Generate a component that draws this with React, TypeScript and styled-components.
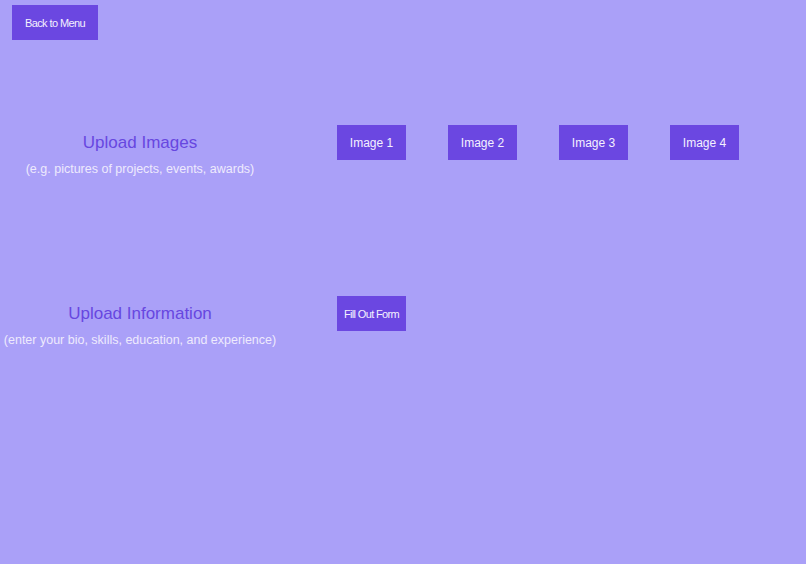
import React from "react";
import styled, { createGlobalStyle } from "styled-components";

const GlobalStyle = createGlobalStyle`
  html, body {
    margin: 0;
    padding: 0;
    background: #aaa0f8;
    font-family: "Liberation Sans", Arial, sans-serif;
  }
`;

const Page = styled.div`
  min-height: 100vh;
  background: #aaa0f8;
  display: flex;
  flex-direction: column;
`;

const TopBar = styled.div`
  display: flex;
  padding: 5px 12px 0;
`;

const Button = styled.button<{ $tight?: boolean }>`
  width: 69px;
  height: 35px;
  padding: 0;
  border: 0;
  border-radius: 0;
  background: #6b47e1;
  color: #f4f1ff;
  font-family: "Liberation Sans", Arial, sans-serif;
  font-size: ${(p) => (p.$tight ? "11px" : "12px")};
  letter-spacing: ${(p) => (p.$tight ? "-0.65px" : "0")};
  white-space: nowrap;
  display: flex;
  align-items: center;
  justify-content: center;
  cursor: pointer;
`;

const MenuButton = styled(Button)`
  width: 86px;
  font-size: 11px;
  letter-spacing: -0.6px;
`;

const Sections = styled.div`
  display: flex;
  flex-direction: column;
  gap: 119px;
  margin-top: 85px;
`;

const Row = styled.div`
  display: flex;
  align-items: flex-start;
  gap: 57px;
`;

const Label = styled.div`
  width: 280px;
  display: flex;
  flex-direction: column;
  align-items: center;
  text-align: center;
`;

const Title = styled.div`
  height: 35px;
  line-height: 35px;
  font-size: 17px;
  color: #6747e0;
`;

const Subtitle = styled.div`
  line-height: 16px;
  padding-top: 1px;
  font-size: 12.5px;
  color: #eeeafd;
  white-space: nowrap;
`;

const Buttons = styled.div`
  display: flex;
  gap: 42px;
`;

export default function App() {
  return (
    <Page>
      <GlobalStyle />
      <TopBar>
        <MenuButton>Back to Menu</MenuButton>
      </TopBar>
      <Sections>
        <Row>
          <Label>
            <Title>Upload Images</Title>
            <Subtitle>(e.g. pictures of projects, events, awards)</Subtitle>
          </Label>
          <Buttons>
            {[1, 2, 3, 4].map((n) => (
              <Button key={n}>Image {n}</Button>
            ))}
          </Buttons>
        </Row>
        <Row>
          <Label>
            <Title>Upload Information</Title>
            <Subtitle>(enter your bio, skills, education, and experience)</Subtitle>
          </Label>
          <Buttons>
            <Button $tight>Fill Out Form</Button>
          </Buttons>
        </Row>
      </Sections>
    </Page>
  );
}
